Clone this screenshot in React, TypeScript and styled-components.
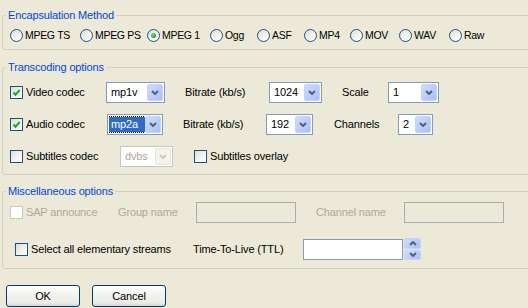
import { createGlobalStyle, styled } from "styled-components"

const GlobalStyle = createGlobalStyle`
  html, body {
    margin: 0;
    padding: 0;
    background: #ece9d8;
    overflow: hidden;
  }
  body {
    font-family: "Liberation Sans", Arial, sans-serif;
    font-size: 11px;
    letter-spacing: -0.15px;
    color: #000;
  }
`

const Dialog = styled.div`
  width: 528px;
  height: 308px;
  padding: 9px 0 0 2px;
  box-sizing: border-box;
  display: flex;
  flex-direction: column;
  overflow: hidden;
`

const Group = styled.fieldset<{ $mt?: number; $pt: number; $pb: number; $gap: number }>`
  margin: ${p => p.$mt ?? 0}px -10px 0 0;
  padding: ${p => p.$pt}px 0 ${p => p.$pb}px 0;
  border: 1px solid #d0d0bf;
  border-radius: 3px;
  display: flex;
  flex-direction: column;
  gap: ${p => p.$gap}px;
  min-width: 0;
`

const Legend = styled.legend`
  margin-left: 3px;
  padding: 0 2px;
  line-height: 13px;
  height: 13px;
  color: #0046d5;
`

const Row = styled.div<{ $h?: number }>`
  display: flex;
  align-items: center;
  height: ${p => p.$h ?? 21}px;
`

const Cell = styled.div<{ $ml?: number; $w?: number }>`
  display: flex;
  align-items: center;
  margin-left: ${p => p.$ml ?? 0}px;
  width: ${p => (p.$w ? `${p.$w}px` : "auto")};
  flex-shrink: 0;
  white-space: nowrap;
`

const Label = styled.span<{ $disabled?: boolean }>`
  color: ${p => (p.$disabled ? "#aca899" : "#000")};
  line-height: 13px;
`

const Box = styled.span<{ $disabled?: boolean }>`
  width: 13px;
  height: 13px;
  box-sizing: border-box;
  border: 1px solid ${p => (p.$disabled ? "#cac8bb" : "#1c5180")};
  background: ${p =>
    p.$disabled ? "#fff" : "linear-gradient(135deg, #dcdcd7 0%, #f4f4f1 60%, #ffffff 100%)"};
  margin-right: 3px;
  display: flex;
  align-items: center;
  justify-content: center;
  flex-shrink: 0;
`

const RadioRow = styled.div`
  display: flex;
  align-items: center;
  height: 21px;
  padding-left: 7px;
`

const RadioItem = styled.label<{ $w: number }>`
  display: flex;
  align-items: center;
  width: ${p => p.$w}px;
  flex-shrink: 0;
  white-space: nowrap;
`

const RadioLabel = styled.span`
  font-size: 10.5px;
  letter-spacing: -0.3px;
  line-height: 13px;
`

const RadioCircle = styled.span`
  width: 13px;
  height: 13px;
  box-sizing: border-box;
  border-radius: 50%;
  border: 1px solid #1c5180;
  background: linear-gradient(135deg, #dcdcd7 0%, #f4f4f1 60%, #ffffff 100%);
  margin-right: 2px;
  display: flex;
  align-items: center;
  justify-content: center;
  flex-shrink: 0;
`

const RadioDot = styled.span`
  width: 5px;
  height: 5px;
  border-radius: 50%;
  background: radial-gradient(circle at 35% 35%, #7be07a 0%, #21a121 70%, #0b8a0b 100%);
`

const Combo = styled.div<{ $w: number; $disabled?: boolean }>`
  width: ${p => p.$w}px;
  height: 21px;
  box-sizing: border-box;
  border: 1px solid ${p => (p.$disabled ? "#c9c7ba" : "#7f9db9")};
  background: #fff;
  display: flex;
  align-items: stretch;
  padding: 1px;
  flex-shrink: 0;
`

const ComboText = styled.div<{ $selected?: boolean; $disabled?: boolean }>`
  flex: 1;
  display: flex;
  align-items: center;
  padding-left: ${p => (p.$selected ? 0 : 3)}px;
  color: ${p => (p.$disabled ? "#aca899" : "#000")};
  overflow: hidden;
  span {
    line-height: 15px;
    padding: 0 ${p => (p.$selected ? "2px" : "0")};
    background: ${p => (p.$selected ? "#316ac5" : "transparent")};
    color: ${p => (p.$selected ? "#fff" : "inherit")};
    outline: ${p => (p.$selected ? "1px dotted #000" : "none")};
    width: ${p => (p.$selected ? "100%" : "auto")};
  }
`

const ArrowButton = styled.div<{ $disabled?: boolean }>`
  width: 16px;
  box-sizing: border-box;
  border: 1px solid ${p => (p.$disabled ? "#e8e6dc" : "#c3d3fd")};
  border-radius: 2px;
  background: ${p =>
    p.$disabled
      ? "#f5f4ea"
      : "linear-gradient(135deg, #d0dcfb 0%, #bacbf6 60%, #a9bff3 100%)"};
  display: flex;
  align-items: center;
  justify-content: center;
`

const TextBox = styled.div<{ $w: number; $disabled?: boolean }>`
  width: ${p => p.$w}px;
  height: 21px;
  box-sizing: border-box;
  border: 1px solid ${p => (p.$disabled ? "#a5acb2" : "#7f9db9")};
  background: ${p => (p.$disabled ? "#ece9d8" : "#fff")};
  flex-shrink: 0;
`

const Spin = styled.div`
  margin-left: 1px;
  width: 17px;
  height: 22px;
  display: flex;
  flex-direction: column;
  gap: 1px;
  flex-shrink: 0;
`

const SpinHalf = styled(ArrowButton)`
  width: 17px;
  flex: 1;
`

const ButtonRow = styled.div`
  display: flex;
  gap: 12px;
  margin-top: 16px;
  padding-left: 4px;
`

const Button = styled.button`
  width: 74px;
  height: 22px;
  box-sizing: border-box;
  border: 1px solid #003c74;
  border-radius: 3px;
  background: linear-gradient(180deg, #ffffff 0%, #f4f3ee 40%, #ecebe6 85%, #d6d0c5 100%);
  font-family: "Liberation Sans", Arial, sans-serif;
  font-size: 11px;
  letter-spacing: -0.15px;
  color: #000;
  padding: 0;
`

const Chevron = ({ color, up }: { color: string; up?: boolean }) => (
  <svg width="8" height="5" viewBox="0 0 8 5">
    <polyline
      points={up ? "1,4 4,1 7,4" : "1,1 4,4 7,1"}
      fill="none"
      stroke={color}
      strokeWidth="2"
    />
  </svg>
)

const Check = ({ label, checked, disabled, ml, w }: { label: string; checked?: boolean; disabled?: boolean; ml?: number; w?: number }) => (
  <Cell $ml={ml} $w={w}>
    <Box $disabled={disabled}>
      {checked && (
        <svg width="9" height="9" viewBox="0 0 9 9">
          <polyline points="1.5,4.5 3.5,6.8 7.6,2" fill="none" stroke="#21a121" strokeWidth="2" />
        </svg>
      )}
    </Box>
    <Label $disabled={disabled}>{label}</Label>
  </Cell>
)

const Select = ({ value, w, ml, selected, disabled }: { value: string; w: number; ml?: number; selected?: boolean; disabled?: boolean }) => (
  <Cell $ml={ml}>
    <Combo $w={w} $disabled={disabled}>
      <ComboText $selected={selected} $disabled={disabled}>
        <span>{value}</span>
      </ComboText>
      <ArrowButton $disabled={disabled}>
        <Chevron color={disabled ? "#c9c7ba" : "#4d6185"} />
      </ArrowButton>
    </Combo>
  </Cell>
)

const Text = ({ label, ml, w, disabled }: { label: string; ml?: number; w?: number; disabled?: boolean }) => (
  <Cell $ml={ml} $w={w}>
    <Label $disabled={disabled}>{label}</Label>
  </Cell>
)

const formats = [
  { name: "MPEG TS", w: 70 },
  { name: "MPEG PS", w: 67 },
  { name: "MPEG 1", w: 63 },
  { name: "Ogg", w: 47 },
  { name: "ASF", w: 47 },
  { name: "MP4", w: 46 },
  { name: "MOV", w: 49 },
  { name: "WAV", w: 50 },
  { name: "Raw", w: 40 },
]

export default function App() {
  return (
    <>
      <GlobalStyle />
      <Dialog>
        <Group $pt={3} $pb={3} $gap={0}>
          <Legend>Encapsulation Method</Legend>
          <RadioRow>
            {formats.map(f => (
              <RadioItem key={f.name} $w={f.w}>
                <RadioCircle>{f.name === "MPEG 1" && <RadioDot />}</RadioCircle>
                <RadioLabel>{f.name}</RadioLabel>
              </RadioItem>
            ))}
          </RadioRow>
        </Group>

        <Group $mt={11} $pt={8} $pb={7} $gap={11}>
          <Legend>Transcoding options</Legend>
          <Row>
            <Check label="Video codec" checked ml={7} w={96} />
            <Select value="mp1v" w={59} />
            <Text label="Bitrate (kb/s)" ml={20} w={84} />
            <Select value="1024" w={53} />
            <Text label="Scale" ml={20} w={46} />
            <Select value="1" w={51} />
          </Row>
          <Row>
            <Check label="Audio codec" checked ml={7} w={97} />
            <Select value="mp2a" w={56} selected />
            <Text label="Bitrate (kb/s)" ml={20} w={83} />
            <Select value="192" w={47} />
            <Text label="Channels" ml={21} w={64} />
            <Select value="2" w={35} />
          </Row>
          <Row>
            <Check label="Subtitles codec" ml={7} w={110} />
            <Select value="dvbs" w={53} disabled />
            <Check label="Subtitles overlay" ml={21} />
          </Row>
        </Group>

        <Group $mt={10} $pt={4} $pb={8} $gap={15}>
          <Legend>Miscellaneous options</Legend>
          <Row>
            <Check label="SAP announce" disabled ml={7} w={108} />
            <Text label="Group name" w={78} disabled />
            <TextBox $w={100} $disabled />
            <Text label="Channel name" ml={20} w={88} disabled />
            <TextBox $w={100} $disabled />
          </Row>
          <Row $h={22}>
            <Check label="Select all elementary streams" ml={12} w={178} />
            <Text label="Time-To-Live (TTL)" w={110} />
            <TextBox $w={100} />
            <Spin>
              <SpinHalf>
                <Chevron color="#4d6185" up />
              </SpinHalf>
              <SpinHalf>
                <Chevron color="#4d6185" />
              </SpinHalf>
            </Spin>
          </Row>
        </Group>

        <ButtonRow>
          <Button>OK</Button>
          <Button>Cancel</Button>
        </ButtonRow>
      </Dialog>
    </>
  )
}
